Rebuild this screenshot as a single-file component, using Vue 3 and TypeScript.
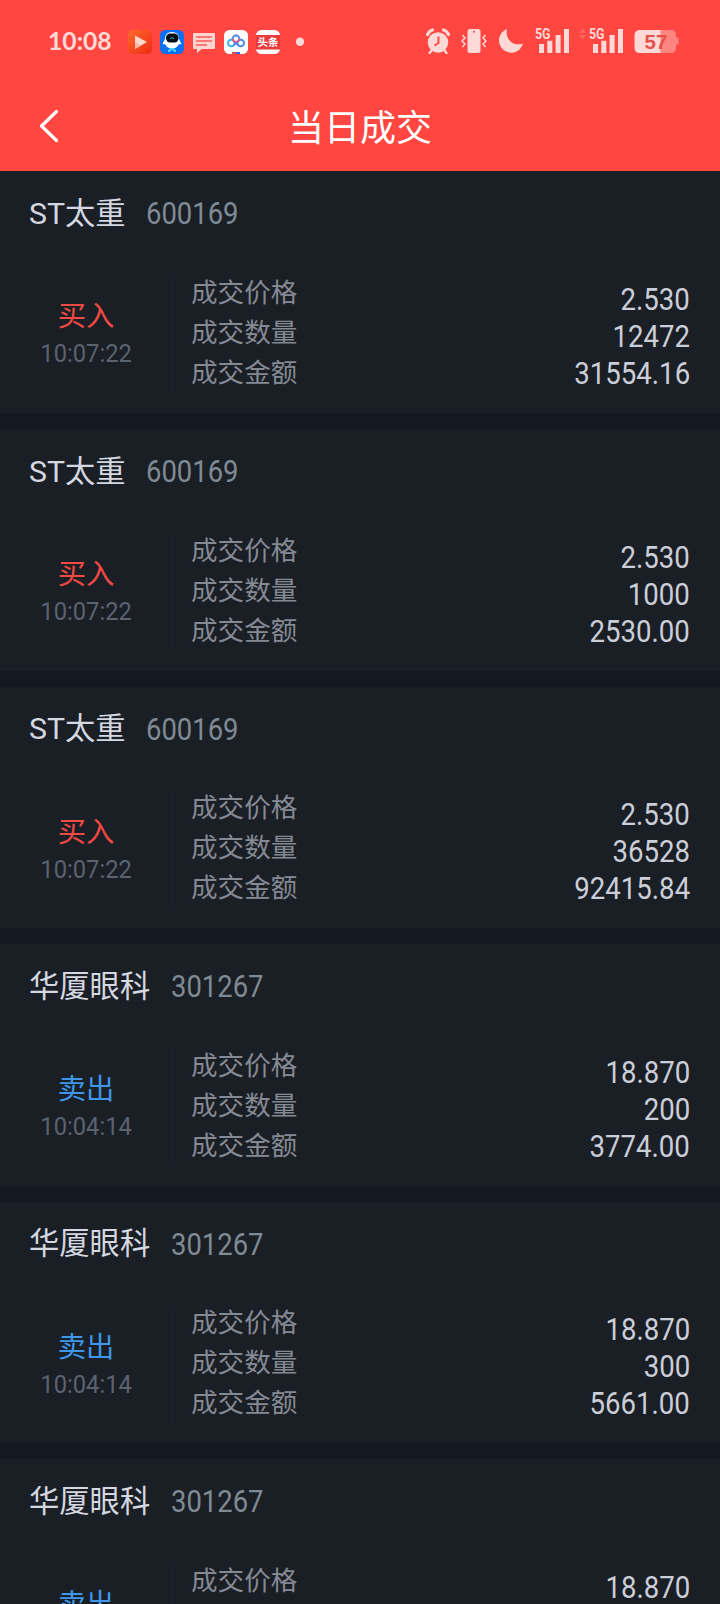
<script setup lang="ts">
interface Deal {
  name: string
  code: string
  side: 'buy' | 'sell'
  time: string
  price: string
  quantity: string
  amount: string
}

const deals: Deal[] = [
  { name: 'ST太重', code: '600169', side: 'buy', time: '10:07:22', price: '2.530', quantity: '12472', amount: '31554.16' },
  { name: 'ST太重', code: '600169', side: 'buy', time: '10:07:22', price: '2.530', quantity: '1000', amount: '2530.00' },
  { name: 'ST太重', code: '600169', side: 'buy', time: '10:07:22', price: '2.530', quantity: '36528', amount: '92415.84' },
  { name: '华厦眼科', code: '301267', side: 'sell', time: '10:04:14', price: '18.870', quantity: '200', amount: '3774.00' },
  { name: '华厦眼科', code: '301267', side: 'sell', time: '10:04:14', price: '18.870', quantity: '300', amount: '5661.00' },
  { name: '华厦眼科', code: '301267', side: 'sell', time: '10:04:14', price: '18.870', quantity: '', amount: '' },
]
</script>

<template>
  <main class="screen">
    <header class="top">
      <div class="status">
        <span class="clock">10:08</span>
        <div class="apps">
          <svg width="24" height="24" viewBox="0 0 24 24">
            <defs>
              <linearGradient id="play" x1="0" y1="0" x2="1" y2="1">
                <stop offset="0" stop-color="#ff6a2c" /><stop offset="1" stop-color="#ee2a14" />
              </linearGradient>
            </defs>
            <rect width="24" height="24" rx="5" fill="url(#play)" />
            <path d="M7 5.500v13.500l12-7z" fill="#ffd9cf" />
            <path d="M7 12v7l6-3.500z" fill="#ffb7a5" />
          </svg>
          <svg width="24" height="24" viewBox="0 0 24 24">
            <rect width="24" height="24" rx="5.500" fill="#0870f5" />
            <path d="M5 9Q5 2 12 2t7 7l2.500 5-3 .5q-1.500 4-6.500 4t-6.500-4l-3-.5z" fill="#fff" />
            <rect x="6" y="3.500" width="12.500" height="9" rx="4.200" fill="#071017" />
            <path d="M10.200 9q1.900-3 3.800 0" fill="none" stroke="#2cc5c9" stroke-width="1" />
            <path d="M8 21q3 0 3-3m2 0q0 3 3 3" fill="none" stroke="#4fd8ff" stroke-width="2" />
          </svg>
          <svg width="24" height="24" viewBox="0 0 24 24">
            <path d="M2 3h20q1 0 1 1v14q0 1-1 1H10l-5 4v-4H2q-1 0-1-1V4q0-1 1-1z" fill="#ffd5d2" />
            <path d="M4 7h16M4 11h16M4 15h11" stroke="#ff5b55" stroke-width="1.500" />
          </svg>
          <svg width="24" height="24" viewBox="0 0 24 24">
            <rect width="24" height="24" rx="5.500" fill="#fff" />
            <g fill="none" stroke-width="2">
              <circle cx="7.300" cy="13" r="3.300" stroke="#3fb1ea" />
              <circle cx="16.700" cy="13" r="3.300" stroke="#4a8ee8" />
              <circle cx="12" cy="8.700" r="3.300" stroke="#d9587f" />
              <path d="M8.700 8.700a3.300 3.300 0 0 1 6.600 0" stroke="#5a9fe9" />
              <path d="M10 15l2-2 2 2" stroke="#5b86e6" />
            </g>
            <path d="M8 22h4v2H8z" fill="#e54b55" /><path d="M12 22h4v2h-4z" fill="#3467e8" />
          </svg>
          <svg width="24" height="24" viewBox="0 0 24 24">
            <rect width="24" height="24" rx="5.500" fill="#fff" />
            <path d="M0 5h24v14.500H0z" fill="#e93a3d" />
            <text class="toutiao" x="12" y="16" text-anchor="middle">头条</text>
          </svg>
          <svg width="24" height="24" viewBox="0 0 24 24">
            <circle cx="12" cy="11.700" r="4.200" fill="#ffd9d7" />
          </svg>
        </div>
        <div class="system">
          <svg width="26" height="26" viewBox="0 0 26 26">
            <circle cx="13" cy="14.500" r="10.300" fill="#ffd9d7" />
            <path d="M2.500 6.500Q4 3 7.500 2M23.500 6.500Q22 3 18.500 2" stroke="#ffd9d7" stroke-width="3.200" fill="none" stroke-linecap="round" />
            <path d="M6.500 22.500l-2 2.500M19.500 22.500l2 2.500" stroke="#ffd9d7" stroke-width="2.300" stroke-linecap="round" />
            <path d="M13.500 8.500v6.500l-4 2.500" stroke="#ff4641" stroke-width="1.900" fill="none" />
          </svg>
          <svg class="vibrate" width="26" height="26" viewBox="0 0 26 26">
            <rect x="6.500" y="1" width="13" height="24" rx="2.500" fill="#ffd9d7" />
            <circle cx="13" cy="3.800" r="1" fill="#ff4641" />
            <path d="M1.500 7l2.500 3-3 3 3 3-2.500 3M24.500 7L22 10l3 3-3 3 2.500 3" stroke="#ffd9d7" stroke-width="1.500" fill="none" />
          </svg>
          <svg class="moon" width="26" height="26" viewBox="0 0 26 26">
            <path d="M9 1A12.200 12.200 0 1 0 25 15.500C16 19 6.500 11.500 9 1z" fill="#ffd9d7" />
          </svg>
          <svg class="signal" width="35" height="34" viewBox="0 -8 35 34">
            <text class="net" x="0" y="11" textLength="15.500" lengthAdjust="spacingAndGlyphs">5G</text>
            <path d="M4 16h5v9H4zM12.300 12.800h5V25h-5zM20.600 7h5v18h-5zM29 1h5v24h-5z" fill="#ffd9d7" />
          </svg>
          <svg class="signal-two" width="45" height="34" viewBox="0 -8 45 34">
            <path d="M0 5l3.500-4.500L7 5zM0 7l3.500 4.500L7 7z" fill="#ff6661" />
            <text class="net" x="10" y="11" textLength="15.500" lengthAdjust="spacingAndGlyphs">5G</text>
            <path d="M14 16h5v9h-5zM22.300 12.800h5V25h-5zM30.600 7h5v18h-5zM39 1h5v24h-5z" fill="#ffd9d7" />
          </svg>
          <svg class="battery" width="46" height="26" viewBox="0 0 46 26">
            <path d="M26 2h11q5 0 5 5v2.500h2.500v7H42V20q0 5-5 5H26z" fill="#ff8581" />
            <path d="M6 2h20.500v23H6q-5.500 0-5.500-5.500v-12Q.5 2 6 2z" fill="#ffd9d7" />
            <text class="level" x="22" y="21" text-anchor="middle">57</text>
          </svg>
        </div>
      </div>
      <div class="nav">
        <svg class="back" width="20" height="34" viewBox="0 0 20 34">
          <path d="M17.500 2.500L2.500 17l15 14.500" fill="none" stroke="#fff" stroke-width="3.200" stroke-linecap="round" stroke-linejoin="round" />
        </svg>
        <h1>当日成交</h1>
      </div>
    </header>

    <section class="deals">
      <article v-for="(deal, i) in deals" :key="i" class="deal">
        <div class="stock">
          <span class="name">{{ deal.name }}</span>
          <span class="code">{{ deal.code }}</span>
        </div>
        <div class="body">
          <div class="action">
            <span class="side" :class="deal.side">{{ deal.side === 'buy' ? '买入' : '卖出' }}</span>
            <span class="time">{{ deal.time }}</span>
          </div>
          <div class="labels">
            <span>成交价格</span>
            <span>成交数量</span>
            <span>成交金额</span>
          </div>
          <div class="values">
            <span>{{ deal.price }}</span>
            <span>{{ deal.quantity }}</span>
            <span>{{ deal.amount }}</span>
          </div>
        </div>
      </article>
    </section>
  </main>
</template>

<style>
body {
  margin: 0;
  background: #141820;
}
</style>

<style scoped>
.screen {
  width: 720px;
  height: 1604px;
  overflow: hidden;
  background: #141820;
  font-family: Roboto, "Noto Sans CJK SC", sans-serif;
}
.top {
  height: 171px;
  box-sizing: border-box;
  background: #ff4641;
  color: #fff;
}
.status {
  height: 82px;
  display: flex;
  align-items: center;
}
.clock {
  width: 80px;
  margin-left: 48px;
  font: 700 24.700px/30px Lato, sans-serif;
  color: #ffd9d7;
}
.apps {
  display: flex;
  gap: 8px;
  margin-top: 2px;
}
.system {
  display: flex;
  align-items: flex-end;
  height: 26px;
  margin-left: 113px;
}
.vibrate { margin-left: 10px; }
.moon { margin-left: 11px; }
.signal { margin-left: 11px; }
.signal-two { margin-left: 9px; }
.battery { margin-left: 10px; }
svg {
  display: block;
  flex: none;
}
.toutiao {
  font: 700 10.500px "Noto Sans CJK SC", sans-serif;
  fill: #fff;
}
.net {
  font: 700 15px Roboto, sans-serif;
  fill: #ffd9d7;
}
.level {
  font: 700 20.500px "Liberation Sans", sans-serif;
  fill: #e5504b;
}
.nav {
  height: 89px;
  display: grid;
  grid-template-columns: 80px 1fr 80px;
  align-items: center;
}
.back {
  margin: 0 0 1px 39px;
}
h1 {
  margin: 5px 0 0;
  text-align: center;
  font-size: 36px;
  line-height: 48px;
  font-weight: 400;
}
.deals {
  display: flex;
  flex-direction: column;
  gap: 16px;
}
.deal {
  flex: none;
  height: 241.5px;
  background: #1a1e25;
}
.deal:first-child {
  height: 242px;
}
.stock {
  height: 80px;
  padding-left: 29px;
  display: flex;
  align-items: center;
  gap: 20.500px;
}
.name {
  margin-top: 5px;
  font-size: 30.3px;
  line-height: 40px;
  color: #d5d8e0;
}
.code {
  margin-top: 6px;
  font-size: 31px;
  line-height: 40px;
  color: #808a94;
  transform: scaleX(0.885);
  transform-origin: left;
}
.body {
  height: 116px;
  margin-top: 24px;
  display: grid;
  grid-template-columns: 173px 1fr 1fr;
}
.action {
  display: flex;
  flex-direction: column;
  align-items: center;
  padding-top: 22px;
  border-right: 1px solid #1e232b;
}
.side {
  font-size: 28.300px;
  line-height: 40px;
}
.buy { color: #f44a43; }
.sell { color: #3e97ea; }
.time {
  margin-top: -2px;
  font-size: 26.5px;
  line-height: 36px;
  color: #5c6370;
  transform: scaleX(0.895);
}
.labels {
  display: flex;
  flex-direction: column;
  padding: 0 0 0 18px;
  margin-top: -2.500px;
  font-size: 26.6px;
  line-height: 40px;
  color: #858994;
}
.values {
  display: flex;
  flex-direction: column;
  align-items: flex-end;
  padding-right: 30px;
  margin-top: 5.500px;
  font-size: 31px;
  line-height: 37.2px;
  color: #cbced8;
}
.values span {
  min-height: 37.2px;
  transform: scaleX(0.89);
  transform-origin: right;
}
</style>
